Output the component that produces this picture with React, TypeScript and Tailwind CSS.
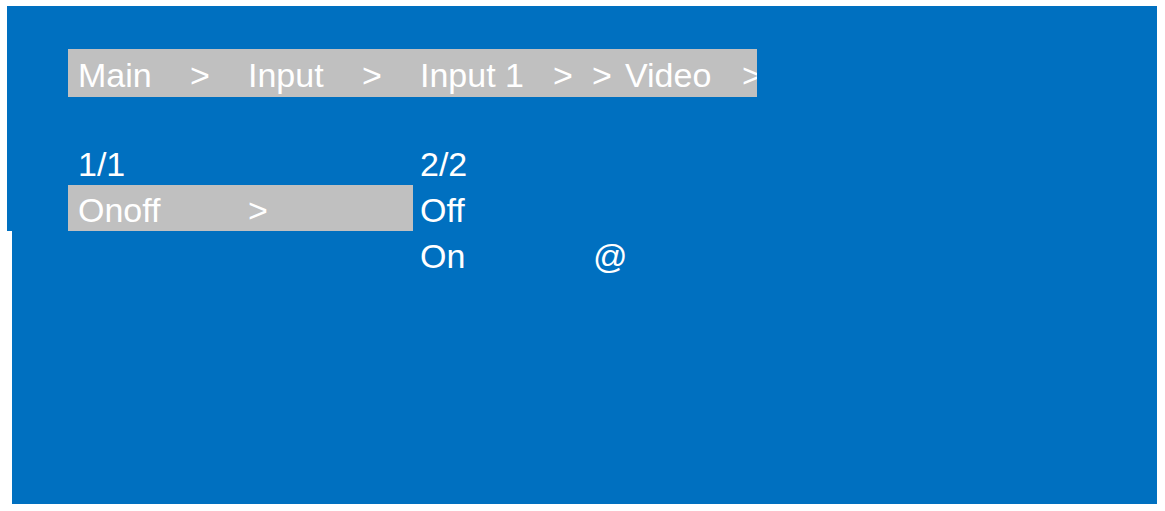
const crumbs = [
  { text: "Main", w: "w-[112px]" },
  { text: ">", w: "w-[58px]" },
  { text: "Input", w: "w-[114px]" },
  { text: ">", w: "w-[58px]" },
  { text: "Input 1", w: "w-[133px]" },
  { text: ">", w: "w-[39px]" },
  { text: ">", w: "w-[33px]" },
  { text: "Video", w: "w-[117px]" },
  { text: ">", w: "w-[40px]" },
];

export default function App() {
  return (
    <div
      className="w-[1165px] h-[511px] bg-white pt-[6px] pl-[7px] overflow-hidden"
      style={{ fontFamily: '"Liberation Sans", Arial, sans-serif' }}
    >
      <div className="flex items-start">
        {/* left notch of the screen grab */}
        <div className="w-[5px] h-[225px] bg-[#0070c0]" />
        <div className="w-[1145px] h-[498px] bg-[#0070c0] pt-[43px] pl-[56px] text-white text-[34px]">
          {/* Breadcrumb */}
          <div className="w-[689px] h-[48px] bg-[#c0c0c0] leading-[52px] pl-[10px] flex overflow-hidden whitespace-pre">
            {crumbs.map((c, i) => (
              <span key={i} className={`${c.w} shrink-0`}>
                {c.text}
              </span>
            ))}
          </div>

          {/* Menu columns */}
          <div className="mt-[42px] flex">
            <div className="w-[345px] flex flex-col">
              <div className="h-[46px] leading-[50px] pl-[10px]">1/1</div>
              <div className="h-[46px] leading-[50px] pl-[10px] bg-[#c0c0c0] flex">
                <span className="w-[170px]">Onoff</span>
                <span>&gt;</span>
              </div>
            </div>
            <div className="flex flex-col pl-[7px]">
              <div className="h-[46px] leading-[50px]">2/2</div>
              <div className="h-[46px] leading-[50px]">Off</div>
              <div className="h-[46px] leading-[50px] flex">
                <span className="w-[173px]">On</span>
                <span>@</span>
              </div>
            </div>
          </div>
        </div>
      </div>
    </div>
  );
}
